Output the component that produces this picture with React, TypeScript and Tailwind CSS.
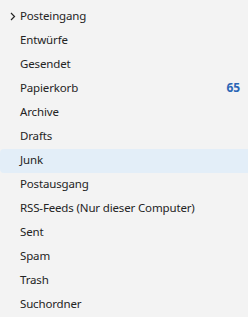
import React from "react";

const items = [
  "Posteingang",
  "Entwürfe",
  "Gesendet",
  "Papierkorb",
  "Archive",
  "Drafts",
  "Junk",
  "Postausgang",
  "RSS-Feeds (Nur dieser Computer)",
  "Sent",
  "Spam",
  "Trash",
  "Suchordner",
];

export default function App() {
  return (
    <div
      className="w-[248px] h-[317px] bg-[#f3f3f3] overflow-hidden pt-[5px] text-[11.5px] tracking-[-0.15px] text-[#242424]"
      style={{ fontFamily: '"Noto Sans", sans-serif' }}
    >
      {items.map((name, i) => (
        <div
          key={name}
          className={`h-[24px] flex items-center pl-[20px] pr-[8px] pb-[2px] ${
            name === "Junk" ? "bg-[#e3eef8] rounded-l-[4px]" : ""
          }`}
        >
          {i === 0 && (
            <svg
              width="6"
              height="9"
              viewBox="0 0 6 9"
              className="ml-[-10px] mr-[4px]"
            >
              <path d="M1 1l3.5 3.5L1 8" fill="none" stroke="#242424" strokeWidth="1.2" />
            </svg>
          )}
          <span className="flex-1 leading-none">{name}</span>
          {name === "Papierkorb" && (
            <span className="font-bold text-[12px] text-[#2b66b6]">65</span>
          )}
        </div>
      ))}
    </div>
  );
}
